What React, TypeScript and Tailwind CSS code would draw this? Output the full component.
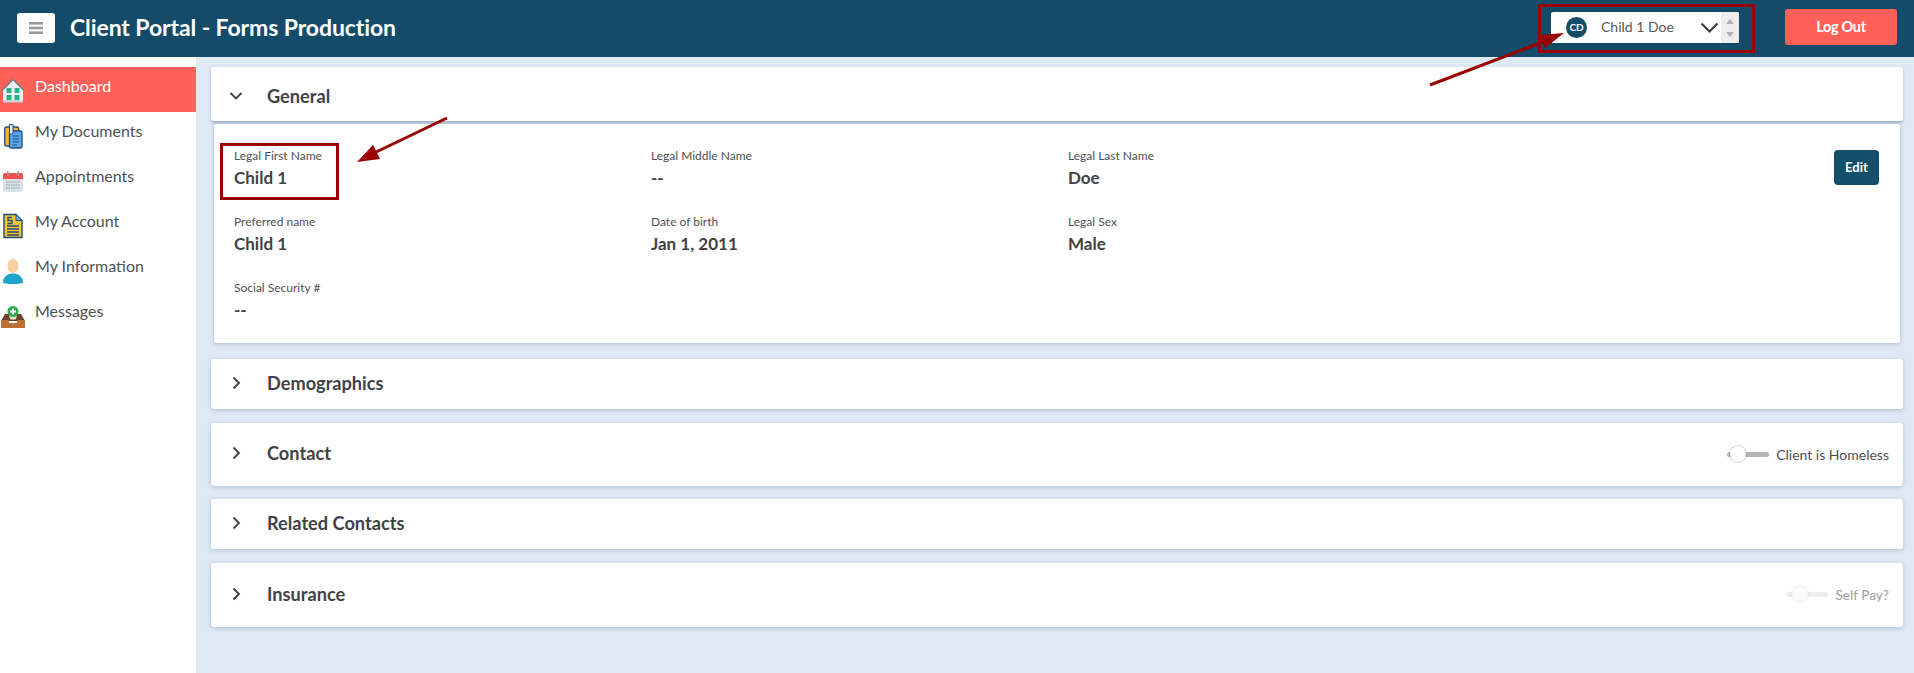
import React from "react";

const font = { fontFamily: '"Lato", "Liberation Sans", sans-serif' };

function HomeIcon() {
  return (
    <svg width="26" height="26" viewBox="0 0 26 26">
      <path d="M3 12 L13 2 L23 12 V24 H3 Z" fill="#eef1ee" />
      <path d="M1.5 13 L13 1.5 L24.5 13" fill="none" stroke="#6d7f8c" strokeWidth="1.4" />
      <path d="M3 22 H23 V24.5 H3 Z" fill="#cfd6d2" />
      <rect x="6.5" y="10" width="5" height="5" fill="#25b48a" />
      <rect x="14.5" y="10" width="5" height="5" fill="#25b48a" />
      <rect x="6.5" y="17" width="5" height="5" fill="#25b48a" />
      <rect x="14.5" y="17" width="5" height="5" fill="#25b48a" />
    </svg>
  );
}
function DocsIcon() {
  return (
    <svg width="26" height="26" viewBox="0 0 26 26">
      <rect x="4.7" y="4" width="14" height="19" rx="2" fill="#f5b82e" stroke="#1d4e79" strokeWidth="1.3" />
      <rect x="9.5" y="8" width="12.5" height="17" rx="1.5" fill="#5aa6e6" stroke="#1d4e79" strokeWidth="1.3" />
      <path d="M12.5 13 H19 M12.5 16 H19 M12.5 19 H19 M12.5 22 H17" stroke="#1d4e79" strokeWidth="1.1" />
      <path d="M9.5 1.5 H13 V9.5 a1.7 1.7 0 0 1 -3.5 0 Z" fill="#e9eef3" stroke="#1d4e79" strokeWidth="1" />
    </svg>
  );
}
function CalendarIcon() {
  return (
    <svg width="26" height="26" viewBox="0 0 26 26">
      <rect x="3" y="5" width="20" height="19" rx="2" fill="#dbe2e6" />
      <path d="M3 11 V7 a2 2 0 0 1 2 -2 H21 a2 2 0 0 1 2 2 V11 Z" fill="#f0524f" />
      <rect x="7" y="3" width="1.6" height="5" fill="#9aa5ab" />
      <rect x="17.4" y="3" width="1.6" height="5" fill="#9aa5ab" />
      <path d="M6 14 H20 M6 17 H20 M6 20 H20" stroke="#aab4b9" strokeWidth="1.6" strokeDasharray="1.6 0.8" />
    </svg>
  );
}
function AccountIcon() {
  return (
    <svg width="26" height="26" viewBox="0 0 26 26">
      <path d="M4 1.5 H16 L22 7.5 V24.5 H4 Z" fill="#f9c22e" stroke="#1d4e79" strokeWidth="1.4" />
      <path d="M16 1.5 V7.5 H22 Z" fill="#7fb2d8" stroke="#1d4e79" strokeWidth="1" />
      <path d="M7 13 H19 M7 16 H19 M7 19 H19 M7 22 H19" stroke="#1d4e79" strokeWidth="1.3" />
      <path d="M12 4.5 H8 V7.5 H12 V10.5 H7.5" fill="none" stroke="#1d4e79" strokeWidth="1.3" />
    </svg>
  );
}
function PersonIcon() {
  return (
    <svg width="26" height="26" viewBox="0 0 26 26">
      <path d="M3 25 C3 18 8 15.5 13 15.5 C18 15.5 23 18 23 25 C17 26.5 9 26.5 3 25 Z" fill="#1fa3c8" />
      <ellipse cx="13" cy="8" rx="5.6" ry="7" fill="#fbcfa4" />
    </svg>
  );
}
function InboxIcon() {
  return (
    <svg width="26" height="26" viewBox="0 0 26 26">
      <path d="M5 11 H21 L25 18 H1 Z" fill="#6e4326" />
      <path d="M1 17 H8 L9.5 20 H16.5 L18 17 H25 V25 H1 Z" fill="#bb7138" />
      <path d="M9 13 H17 L15.5 16.5 H10.5 Z" fill="#eee3d3" />
      <circle cx="13" cy="8.5" r="5.5" fill="#2fa84f" />
      <path d="M13 5.5 V11.5 M10 8.5 H16" stroke="#fff" strokeWidth="2" />
    </svg>
  );
}

const navItems = [
  { label: "Dashboard", icon: <HomeIcon />, active: true },
  { label: "My Documents", icon: <DocsIcon /> },
  { label: "Appointments", icon: <CalendarIcon /> },
  { label: "My Account", icon: <AccountIcon /> },
  { label: "My Information", icon: <PersonIcon /> },
  { label: "Messages", icon: <InboxIcon /> },
];

const fields = [
  ["Legal First Name", "Child 1"],
  ["Legal Middle Name", "--"],
  ["Legal Last Name", "Doe"],
  ["Preferred name", "Child 1"],
  ["Date of birth", "Jan 1, 2011"],
  ["Legal Sex", "Male"],
  ["Social Security #", "--"],
];

function Chevron({ open }: { open?: boolean }) {
  return (
    <svg width="14" height="14" viewBox="0 0 14 14" fill="none" stroke="#3a3f44" strokeWidth="1.8">
      {open ? <path d="M1.5 4 L7 9.5 L12.5 4" /> : <path d="M4.5 1.5 L10 7 L4.5 12.5" />}
    </svg>
  );
}

function Panel({
  title,
  open,
  className,
  titleClass,
  children,
}: {
  title: string;
  open?: boolean;
  className: string;
  titleClass: string;
  children?: React.ReactNode;
}) {
  return (
    <div
      className={`flex items-center bg-white rounded-[3px] pl-[18px] pr-[14px] shadow-[0_1px_4px_rgba(90,110,140,0.35)] ${className}`}
    >
      <div className={`flex items-center ${titleClass}`}>
        <span className="flex w-[38px]">
          <Chevron open={open} />
        </span>
        <span className="text-[18.2px] font-bold text-[#3f4347]">{title}</span>
      </div>
      {children && <div className="ml-auto flex items-center">{children}</div>}
    </div>
  );
}

export default function App() {
  return (
    <div style={font} className="relative h-[673px] w-[1914px] overflow-hidden bg-[#dfe9f5] text-[#3a3f44]">
      <header className="flex h-[57px] items-center bg-[#134b69] pl-[17px] pr-[17px]">
        <button className="flex h-[30px] w-[38px] items-center justify-center rounded-[3px] bg-white mt-[-1px]">
          <svg width="14" height="12" viewBox="0 0 14 12" fill="#9a9a9a">
            <rect width="14" height="2.6" />
            <rect y="4.7" width="14" height="2.6" />
            <rect y="9.4" width="14" height="2.6" />
          </svg>
        </button>
        <h1 className="ml-[15px] mt-[-2px] text-[23px] font-bold leading-none text-white tracking-[-0.1px]">
          Client Portal - Forms Production
        </h1>
        <div className="ml-auto flex h-[31px] w-[188px] items-center rounded-[2px] bg-white mt-[-2px]">
          <span className="ml-[15px] flex h-[21px] w-[21px] items-center justify-center rounded-full bg-[#134b69] text-[10px] font-bold text-white">
            CD
          </span>
          <span className="ml-[14px] mb-[2px] text-[14px] text-[#55595d]">Child 1 Doe</span>
          <svg className="ml-[26px]" width="20" height="12" viewBox="0 0 20 12" fill="none" stroke="#3a3f44" strokeWidth="2.2">
            <path d="M1.5 1.5 L9.5 9.5 L17.5 1.5" />
          </svg>
          <span className="ml-auto flex h-full w-[18px] flex-col items-center justify-center gap-[8px] rounded-r-[2px] bg-[#eeeeee]">
            <svg width="8" height="5" viewBox="0 0 8 5" fill="#b3b3b3"><path d="M4 0 L8 5 H0 Z" /></svg>
            <svg width="8" height="5" viewBox="0 0 8 5" fill="#b3b3b3"><path d="M0 0 H8 L4 5 Z" /></svg>
          </span>
        </div>
        <button className="ml-[46px] mt-[-3px] h-[36px] w-[112px] rounded-[3px] bg-[#ff6159] pb-[1px] text-[14.5px] font-bold tracking-[-0.3px] text-white">
          Log Out
        </button>
      </header>

      <div className="flex h-[616px]">
        <aside className="w-[196px] shrink-0 bg-white pt-[10px]">
          {navItems.map((item) => (
            <div
              key={item.label}
              className={`flex h-[45px] items-center pb-[2px] text-[16px] ${
                item.active ? "bg-[#ff6159] text-white" : "text-[#4d5155]"
              }`}
            >
              <span className="flex w-[26px] pt-[4px] shrink-0">{item.icon}</span>
              <span className="ml-[9px] mb-[6px]">{item.label}</span>
            </div>
          ))}
        </aside>

        <main className="flex-1 pl-[15px] pr-[11px] pt-[10px]">
          <Panel title="General" open titleClass="mt-[5px]" className="h-[54px] shadow-[0_2px_3px_rgba(90,110,140,0.45)]" />
          <section className="relative mx-[3px] mt-[3px] h-[219px] rounded-[3px] bg-white pl-[20px] pt-[23px] shadow-[0_1px_4px_rgba(90,110,140,0.4)]">
            <div className="grid grid-cols-[417px_417px_300px] auto-rows-[66px]">
              {fields.map(([label, value]) => (
                <div key={label}>
                  <div className="text-[12px] leading-[18px] text-[#4d5155]">{label}</div>
                  <div className="mt-[3px] text-[17px] font-bold leading-[20px] text-[#3f4347]">{value}</div>
                </div>
              ))}
            </div>
            <button className="absolute right-[21px] top-[26px] h-[35px] w-[45px] rounded-[4px] bg-[#134f6b] text-[13px] font-bold text-white">
              Edit
            </button>
          </section>
          <Panel title="Demographics" titleClass="mb-[1px]" className="mt-[16px] h-[50px]" />
          <Panel title="Contact" titleClass="mb-[2px]" className="mt-[14px] h-[63px]">
            <div className="flex items-center gap-[7px]">
              <span className="relative block h-[5px] w-[42px] rounded-full bg-[#b5b5b5]">
                <span className="absolute left-[3px] top-[-6px] h-[16px] w-[16px] rounded-full bg-white shadow-[0_0_2px_rgba(0,0,0,0.45)]" />
              </span>
              <span className="text-[14px] text-[#4a4f54]">Client is Homeless</span>
            </div>
          </Panel>
          <Panel title="Related Contacts" titleClass="mb-[1px]" className="mt-[13px] h-[50px]" />
          <Panel title="Insurance" titleClass="mb-[1px]" className="mt-[14px] h-[64px]">
            <div className="flex items-center gap-[7px]">
              <span className="relative block h-[5px] w-[42px] rounded-full bg-[#eeeeee]">
                <span className="absolute left-[6px] top-[-6px] h-[16px] w-[16px] rounded-full bg-[#fbfbfb] shadow-[0_0_2px_rgba(0,0,0,0.15)]" />
              </span>
              <span className="text-[13.6px] font-medium text-[#a6a6a6]">Self Pay?</span>
            </div>
          </Panel>
        </main>
      </div>

      {/* Annotations drawn over the screenshot */}
      <div className="absolute left-[220px] top-[143px] h-[57px] w-[119px] border-[3px] border-[#990000]" />
      <div className="absolute left-[1538px] top-[4px] h-[49px] w-[217px] border-[3px] border-[#990000]" />
      <svg className="absolute left-0 top-0 pointer-events-none" width="1914" height="673">
        <line x1="447" y1="118" x2="372" y2="154" stroke="#990000" strokeWidth="3" />
        <path d="M357 162 L373 145 L380 159 Z" fill="#990000" />
        <line x1="1430" y1="85" x2="1545" y2="41" stroke="#990000" strokeWidth="3" />
        <path d="M1564 33 L1540 35 L1545 48 Z" fill="#990000" />
      </svg>
    </div>
  );
}
